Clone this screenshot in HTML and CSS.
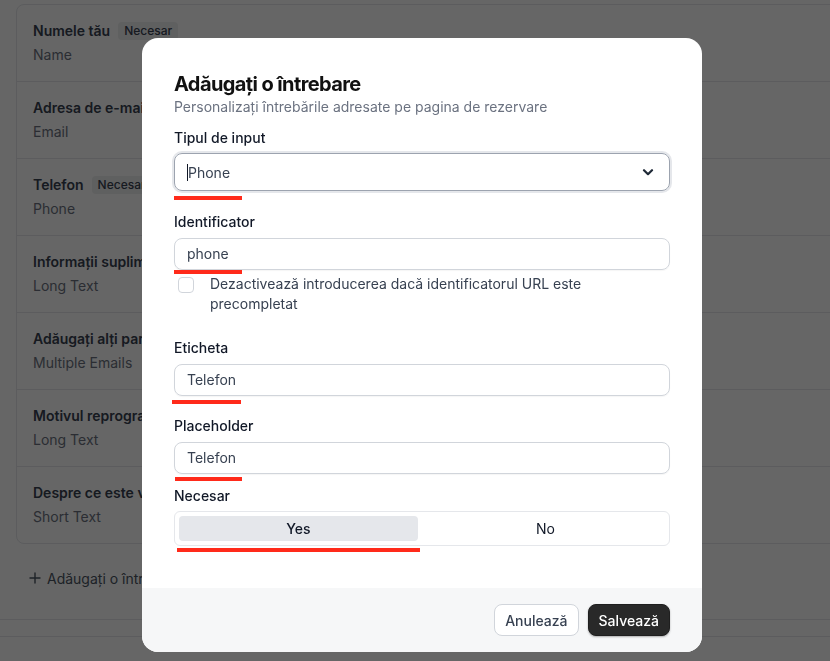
FILE: index.html
```html
<!DOCTYPE html>
<html lang="ro">
<head>
<meta charset="utf-8">
<title>Adăugați o întrebare</title>
<link rel="stylesheet" href="styles.css">
</head>
<body>
<div class="page">
  <div class="qcard">
    <div class="qrow"><div class="qtitle">Numele tău <span class="badge">Necesar</span></div><div class="qsub">Name</div></div>
    <div class="qrow"><div class="qtitle">Adresa de e-mail <span class="badge">Necesar</span></div><div class="qsub">Email</div></div>
    <div class="qrow"><div class="qtitle">Telefon <span class="badge">Necesar</span></div><div class="qsub">Phone</div></div>
    <div class="qrow"><div class="qtitle">Informații suplimentare</div><div class="qsub">Long Text</div></div>
    <div class="qrow"><div class="qtitle">Adăugați alți participanți</div><div class="qsub">Multiple Emails</div></div>
    <div class="qrow"><div class="qtitle">Motivul reprogramării</div><div class="qsub">Long Text</div></div>
    <div class="qrow"><div class="qtitle">Despre ce este vorba</div><div class="qsub">Short Text</div></div>
  </div>
  <div class="addq">
    <svg class="plus" width="12" height="12" viewBox="0 0 12 12"><path d="M6 1v10M1 6h10" stroke="currentColor" stroke-width="1.4" fill="none" stroke-linecap="round"/></svg>
    <span>Adăugați o întrebare</span>
  </div>
  <div class="pline first"></div>
  <div class="pline"></div>
</div>

<div class="overlay"></div>

<div class="modal">
  <div class="mbody">
    <h1 class="mtitle">Adăugați o întrebare</h1>
    <p class="msub">Personalizați întrebările adresate pe pagina de rezervare</p>

    <div class="field f-type">
      <div class="label">Tipul de input</div>
      <div class="select">
        <span class="caret"></span><span class="val">Phone</span>
        <svg class="chev" width="14" height="14" viewBox="0 0 14 14"><path d="M3 5.2l4 4 4-4" stroke="#1f2937" stroke-width="2.2" fill="none" stroke-linecap="round" stroke-linejoin="round"/></svg>
      </div>
      <div class="mark m1"></div>
    </div>

    <div class="field">
      <div class="label">Identificator</div>
      <div class="input">phone</div>
      <div class="mark m2"></div>
      <label class="check">
        <span class="box"></span>
        <span class="ctext">Dezactivează introducerea dacă identificatorul URL este precompletat</span>
      </label>
    </div>

    <div class="field">
      <div class="label">Eticheta</div>
      <div class="input">Telefon</div>
      <div class="mark m3"></div>
    </div>

    <div class="field f-ph">
      <div class="label">Placeholder</div>
      <div class="input">Telefon</div>
      <div class="mark m4"></div>
    </div>

    <div class="field f-nec">
      <div class="label">Necesar</div>
      <div class="toggle">
        <div class="seg on">Yes</div>
        <div class="seg">No</div>
      </div>
      <div class="mark m5"></div>
    </div>
  </div>
  <div class="mfoot">
    <button class="btn ghost">Anulează</button>
    <button class="btn dark">Salvează</button>
  </div>
</div>
</body>
</html>
```

FILE: styles.css
```css
* { box-sizing: border-box; }
html, body { margin: 0; padding: 0; }
body {
  width: 830px;
  height: 661px;
  overflow: hidden;
  background: #ffffff;
  font-family: Inter, "Noto Sans", sans-serif;
  font-size: 14px;
  color: #111827;
}

/* background page */
.page { padding-top: 4px; }
.qcard {
  margin-left: 16px;
  margin-right: -30px;
  border: 1px solid #e5e7eb;
  border-radius: 8px;
}
.qrow {
  height: 77px;
  padding: 16px 16px 0 16px;
  border-top: 1px solid #e5e7eb;
}
.qrow:first-child { border-top: none; height: 76px; }
.qtitle {
  display: flex;
  align-items: center;
  gap: 8px;
  height: 20px;
  line-height: 20px;
  font-weight: 600;
  color: #374151;
}
.badge {
  font-size: 12px;
  font-weight: 500;
  background: #eeeff0;
  color: #374151;
  border-radius: 4px;
  padding: 0 6px;
  line-height: 18px;
}
.qsub { margin-top: 4px; line-height: 20px; color: #6b7280; }
.addq {
  display: flex;
  align-items: center;
  gap: 6px;
  margin: 24px 0 0 29px;
  height: 20px;
  color: #4b5563;
}
.plus { color: #4b5563; }
.pline { border-top: 1px solid #e5e7eb; margin-top: 16px; }
.pline.first { margin-top: 31px; }

.overlay {
  position: fixed;
  inset: 0;
  background: rgba(0, 0, 0, 0.6);
}

/* modal */
.modal {
  position: absolute;
  left: 142px;
  top: 38px;
  width: 560px;
  background: #ffffff;
  border-radius: 16px;
  overflow: hidden;
}
.mbody {
  padding: 34px 32px 42px 32px;
  display: flex;
  flex-direction: column;
}
.mtitle {
  margin: 0 0 1px 0;
  font-size: 20px;
  line-height: 24px;
  font-weight: 700;
  letter-spacing: -0.6px;
  color: #111111;
}
.msub {
  margin: 0 0 11px 0;
  line-height: 20px;
  color: #6b7280;
}
.field { position: relative; margin-bottom: 20px; }
.label {
  line-height: 20px;
  font-weight: 500;
  color: #111827;
  margin-bottom: 6px;
}
.f-type { margin-bottom: 21px; }
.f-type .label { margin-bottom: 5px; }
.select {
  height: 38px;
  border: 1px solid #9ca3af;
  border-radius: 8px;
  box-shadow: 0 0 0 2px #e5e7eb;
  display: flex;
  align-items: center;
  padding: 0 14px 0 12px;
  color: #374151;
}
.caret {
  width: 1px;
  height: 17px;
  background: #111827;
}
.val { flex: 1; }
.chev { flex: none; }
.input {
  height: 32px;
  border: 1px solid #d1d5db;
  border-radius: 8px;
  box-shadow: 0 1px 1px rgba(0, 0, 0, 0.04);
  padding: 0 12px;
  line-height: 30px;
  color: #374151;
}
.check {
  display: flex;
  align-items: flex-start;
  gap: 16px;
  margin-top: 4px;
  padding-left: 4px;
  margin-bottom: 4px;
}
.box {
  flex: none;
  width: 16px;
  height: 16px;
  border: 1px solid #d1d5db;
  border-radius: 4px;
  margin-top: 3px;
}
.ctext { line-height: 20px; color: #374151; width: 400px; }
.f-ph { margin-bottom: 12px; }
.f-nec { margin-bottom: 0; }
.f-nec .label { margin-bottom: 5px; }
.toggle {
  height: 35px;
  border: 1px solid #e5e7eb;
  border-radius: 6px;
  padding: 4px;
  display: flex;
  gap: 8px;
}
.seg {
  flex: 1;
  display: flex;
  align-items: center;
  justify-content: center;
  border-radius: 4px;
  color: #111827;
}
.seg.on { background: #e5e7eb; font-weight: 500; }

.mark {
  position: absolute;
  height: 4px;
  background: #ff2a1a;
}
.m1 { left: 0; width: 68px; bottom: -9px; }
.m2 { left: 0; width: 68px; top: 58px; }
.m3 { left: -2px; width: 69px; bottom: -8px; }
.m4 { left: 1px; width: 67px; bottom: -7px; }
.m5 { left: 3px; width: 243px; bottom: -6px; }

.mfoot {
  background: #f6f7f8;
  height: 64px;
  padding: 0 32px;
  display: flex;
  align-items: center;
  justify-content: flex-end;
  gap: 9px;
}
.btn {
  font-family: Inter, "Noto Sans", sans-serif;
  font-size: 14px;
  font-weight: 500;
  height: 32px;
  border-radius: 8px;
  padding: 0 10px;
}
.ghost {
  background: #ffffff;
  border: 1px solid #d1d5db;
  color: #374151;
}
.dark {
  background: #292929;
  border: 1px solid #1f1f1f;
  color: #ffffff;
  box-shadow: 0 1px 2px rgba(0, 0, 0, 0.3);
}
```
